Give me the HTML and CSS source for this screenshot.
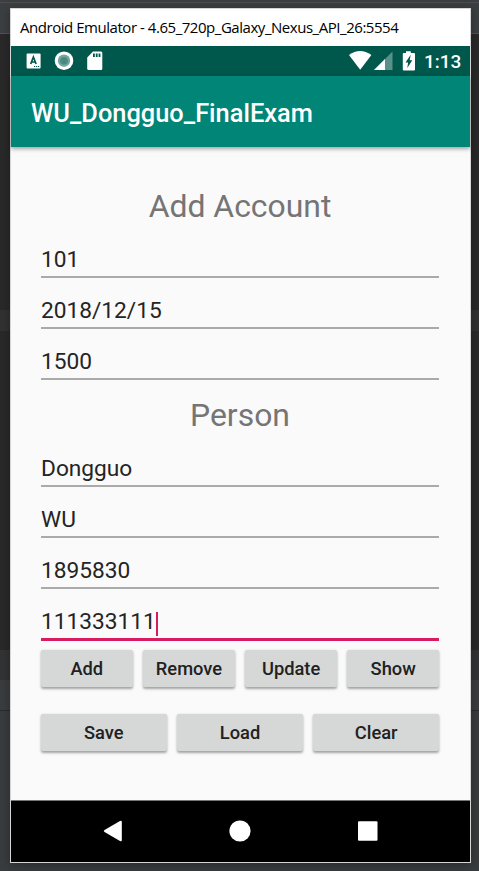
FILE: index.html
```html
<!DOCTYPE html>
<html lang="en">
<head>
<meta charset="utf-8">
<title>Android Emulator</title>
<link rel="stylesheet" href="styles.css">
</head>
<body>
<div class="window">
  <div class="titlebar"><span>Android Emulator - 4.65_720p_Galaxy_Nexus_API_26:5554</span></div>
  <div class="statusbar">
    <svg class="notifications" width="90" height="30" viewBox="0 0 90 30">
      <rect x="15.6" y="7.5" width="14" height="15" rx="1" fill="#fff"/>
      <path d="M19.7 18L22.4 11L25.100 18M20.7 16H24.100" fill="none" stroke="#00574b" stroke-width="1.7"/>
      <path d="M23 20.5h1.2M25 20.5h1.2M27 20.5h1.2" stroke="#00574b"/>
      <circle cx="53" cy="14.700" r="9.3" fill="#fff"/>
      <circle cx="53" cy="14.700" r="6.2" fill="#73a69f"/>
      <circle cx="53" cy="14.700" r="3.8" fill="#4b8a81"/>
      <path d="M82 5.5H90Q91.300 5.500 91.300 7V22.500Q91.300 24 90 24H77.700Q76.200 24 76.200 22.500V11.500Z" fill="#fff"/>
      <path d="M82.900 7.500v3.500M85.700 7.500v3.500M88.500 7.500v3.500" stroke="#00574b" stroke-width="1.800"/>
    </svg>
    <svg class="signals" width="150" height="30" viewBox="0 0 150 30">
      <path d="M29 8.900Q39.900 1.100 51.400 8.900L40.200 23.700Z" fill="#fff"/>
      <path d="M54 24L72.500 5.500V24Z" fill="#5a908a"/>
      <path d="M54 24L65 13V24Z" fill="#fff"/>
      <path d="M86 5.200h4.800v1.700H94q1 0 1 1V23.500q0 1-1 1H83.800q-1 0-1-1V7.900q0-1 1-1H86Z" fill="#fff"/>
      <path d="M90.700 8.800L85.500 16.500H88.100L87.300 22L92.300 14.300H89.700Z" fill="#00574b"/>
    </svg>
    <span class="clock">1:13</span>
  </div>
  <header class="appbar">WU_Dongguo_FinalExam</header>
  <main class="content">
    <h1 class="heading first">Add Account</h1>
    <div class="field">101</div>
    <div class="field">2018/12/15</div>
    <div class="field">1500</div>
    <h1 class="heading">Person</h1>
    <div class="field">Dongguo</div>
    <div class="field">WU</div>
    <div class="field">1895830</div>
    <div class="field active">111333111<i class="caret"></i></div>
    <div class="buttons four">
      <button>Add</button><button>Remove</button><button>Update</button><button>Show</button>
    </div>
    <div class="buttons three">
      <button>Save</button><button>Load</button><button>Clear</button>
    </div>
  </main>
  <nav class="navbar">
    <svg width="459" height="61" viewBox="0 0 459 61">
      <path d="M93.500 29L109 20Q110.800 19 110.800 21V39Q110.800 41 109 40L93.500 31Q92 30 93.500 29Z" fill="#fff"/>
      <circle cx="229" cy="30" r="10.600" fill="#fff"/>
      <rect x="347" y="20.300" width="19.500" height="19.500" rx="1" fill="#fff"/>
    </svg>
  </nav>
</div>
</body>
</html>
```
FILE: styles.css
```css
* { box-sizing: border-box; }
body {
  margin: 0;
  height: 871px;
  overflow: hidden;
  padding: 8px 0 0 10px;
  font-family: Roboto, "Liberation Sans", sans-serif;
  background: linear-gradient(#3c3f41 0 2px, #4b4d4f 2px 3px, #3c3f41 3px 33px, #505253 33px 34px, #292929 34px 310px, #313131 310px 331px, #292929 331px 650px, #313335 650px 680px, #3a3d3f 680px 710px, #2b2b2b 710px 711px, #393c3e 711px);
}
.window {
  width: 461px;
  height: 855px;
  border: 1px solid #d5d5d5;
  background: #fafafa;
  display: flex;
  flex-direction: column;
  box-shadow: 0 2px 10px rgba(0, 0, 0, .3);
}
.titlebar {
  height: 37px;
  flex: none;
  background: #fff;
  color: #000;
  padding-left: 9px;
  font: 15px/37px "Open Sans", "Noto Sans", sans-serif;
  letter-spacing: -.46px;
  white-space: nowrap;
}
.statusbar {
  height: 30px;
  flex: none;
  background: #00574b;
  display: flex;
  color: #fff;
}
.notifications { overflow: visible; }
.signals { flex: none; margin-left: 219px; }
.clock { margin-left: -46px; font-size: 19px; line-height: 31px; font-weight: 500; }
.appbar {
  height: 71px;
  flex: none;
  background: #008577;
  color: #fff;
  font-size: 25.400px;
  font-weight: 500;
  line-height: 74px;
  padding-left: 20px;
  box-shadow: 0 2px 4px rgba(0, 0, 0, .35);
}
.content { flex: 1; padding: 0 31px 0 30px; }
.heading {
  margin: 0;
  height: 56px;
  line-height: 70px;
  text-align: center;
  color: #757575;
  font-size: 31.900px;
  font-weight: 400;
}
.heading.first { height: 80px; line-height: 118px; }
.field {
  height: 51px;
  border-bottom: 2px solid #aaa;
  color: #242424;
  font-size: 22.700px;
  line-height: 65px;
  display: flex;
}
.field.active { height: 52px; border-bottom: 3px solid #d81b60; }
.caret { width: 2px; height: 24px; margin: 23px 0 0; background: #d81b60; }
.buttons { display: grid; gap: 10.500px; }
.four { grid-template-columns: repeat(4, 1fr); margin-top: 9px; }
.three { grid-template-columns: repeat(3, 1fr); margin-top: 27px; }
button {
  height: 37px;
  padding: 0;
  border: 0;
  border-radius: 2px;
  background: #d6d7d7;
  color: #212121;
  font: 500 18.300px/37px Roboto, sans-serif;
  box-shadow: 0 1.500px 2.500px rgba(0, 0, 0, .35);
}
.navbar { height: 62px; flex: none; background: #000; border-top: 1px solid #777; }
.navbar svg { display: block; }
```
